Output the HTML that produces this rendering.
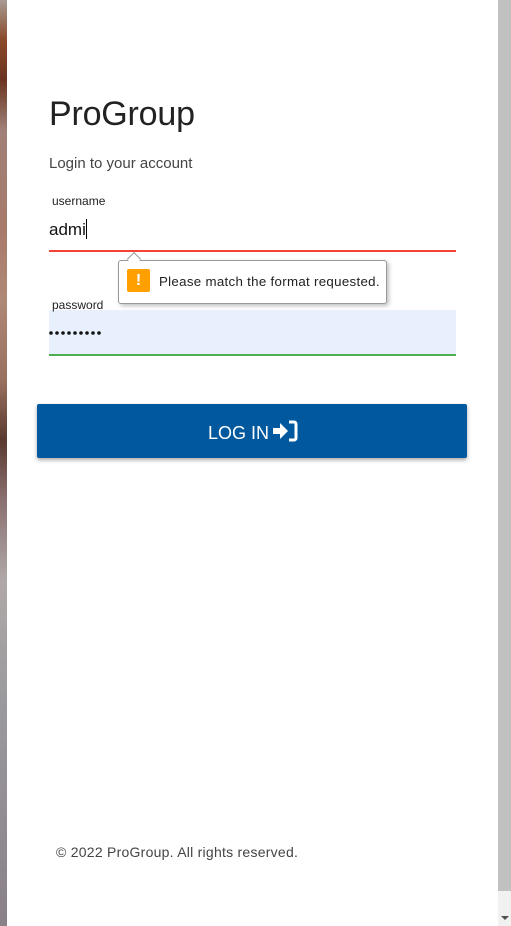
<!DOCTYPE html>
<html><head><meta charset="utf-8"><style>
html,body{margin:0;padding:0;width:511px;height:926px;overflow:hidden;background:#fff;font-family:"Liberation Sans",sans-serif;}
.strip{position:absolute;left:0;top:0;width:7px;height:926px;background:linear-gradient(#a89a92 0,#8a4a2a 40px,#6a3420 80px,#a08078 130px,#a87a6a 230px,#b08878 300px,#9a7060 380px,#5a3a30 440px,#8a7070 500px,#b0a8a8 580px,#9a9a9e 700px,#8a8088 926px);}
.sb{position:absolute;left:498px;top:0;width:13px;height:891px;background:#c1c1c1;}
.sbt{position:absolute;left:498px;top:891px;width:13px;height:35px;background:#f1f1f1;}
.arr{position:absolute;left:501px;top:916px;width:0;height:0;border-left:4px solid transparent;border-right:4px solid transparent;border-top:4px solid #505050;}
.t{position:absolute;white-space:nowrap;}
</style></head><body>
<div class="strip"></div>
<div class="sb"></div><div class="sbt"></div><div class="arr"></div>
<div class="t" style="left:49px;top:95px;font-size:34px;letter-spacing:-0.2px;color:#222;">ProGroup</div>
<div class="t" style="left:49px;top:155px;font-size:15px;color:#444;">Login to your account</div>
<div class="t" style="left:52px;top:194px;font-size:12px;color:#222;">username</div>
<div class="t" style="left:49px;top:219px;font-size:17px;color:#111;">admi<span style="display:inline-block;width:1px;height:20px;background:#000;vertical-align:-4px"></span></div>
<div style="position:absolute;left:49px;top:250px;width:407px;height:2px;background:#f44336"></div>
<div style="position:absolute;left:49px;top:310px;width:407px;height:45px;background:#e8f0fe"></div>
<div class="t" style="left:52px;top:298px;font-size:12px;color:#222;">password</div>
<svg style="position:absolute;left:49px;top:330px" width="54" height="6"><g fill="#111"><circle cx="2" cy="3" r="1.8"/><circle cx="8" cy="3" r="1.8"/><circle cx="14" cy="3" r="1.8"/><circle cx="20" cy="3" r="1.8"/><circle cx="26" cy="3" r="1.8"/><circle cx="32" cy="3" r="1.8"/><circle cx="38" cy="3" r="1.8"/><circle cx="44" cy="3" r="1.8"/><circle cx="50" cy="3" r="1.8"/></g></svg>
<div style="position:absolute;left:49px;top:354px;width:407px;height:2px;background:#4caf50"></div>
<div style="position:absolute;left:118px;top:260px;width:267px;height:42px;background:#fff;border:1px solid #999;border-radius:3px;box-shadow:2px 2px 4px rgba(0,0,0,.25)"></div>
<div style="position:absolute;left:129px;top:254px;width:9px;height:9px;background:#fff;border-left:1px solid #999;border-top:1px solid #999;transform:rotate(45deg)"></div>
<div style="position:absolute;left:127px;top:269px;width:23px;height:23px;background:#ffa000;border-radius:2px;color:#fff;font-weight:bold;font-size:16px;text-align:center;line-height:23px">!</div>
<div class="t" style="left:159px;top:274px;font-size:13.3px;letter-spacing:0.3px;color:#222;">Please match the format requested.</div>
<div style="position:absolute;left:37px;top:404px;width:430px;height:54px;background:#00599f;border-radius:2px;box-shadow:0 2px 4px rgba(0,0,0,.35)"></div>
<div class="t" style="left:208px;top:423px;font-size:18px;color:#fff;">LOG IN</div>
<svg style="position:absolute;left:272px;top:420px" width="26" height="22" viewBox="0 0 26 22"><path d="M1 8h7V3l8 8-8 8v-5H1z" fill="#fff"/><path d="M17 2h5a2 2 0 0 1 2 2v14a2 2 0 0 1-2 2h-5" fill="none" stroke="#fff" stroke-width="3"/></svg>
<div class="t" style="left:56px;top:844px;font-size:14px;letter-spacing:0.25px;color:#444;">© 2022 ProGroup. All rights reserved.</div>
</body></html>
